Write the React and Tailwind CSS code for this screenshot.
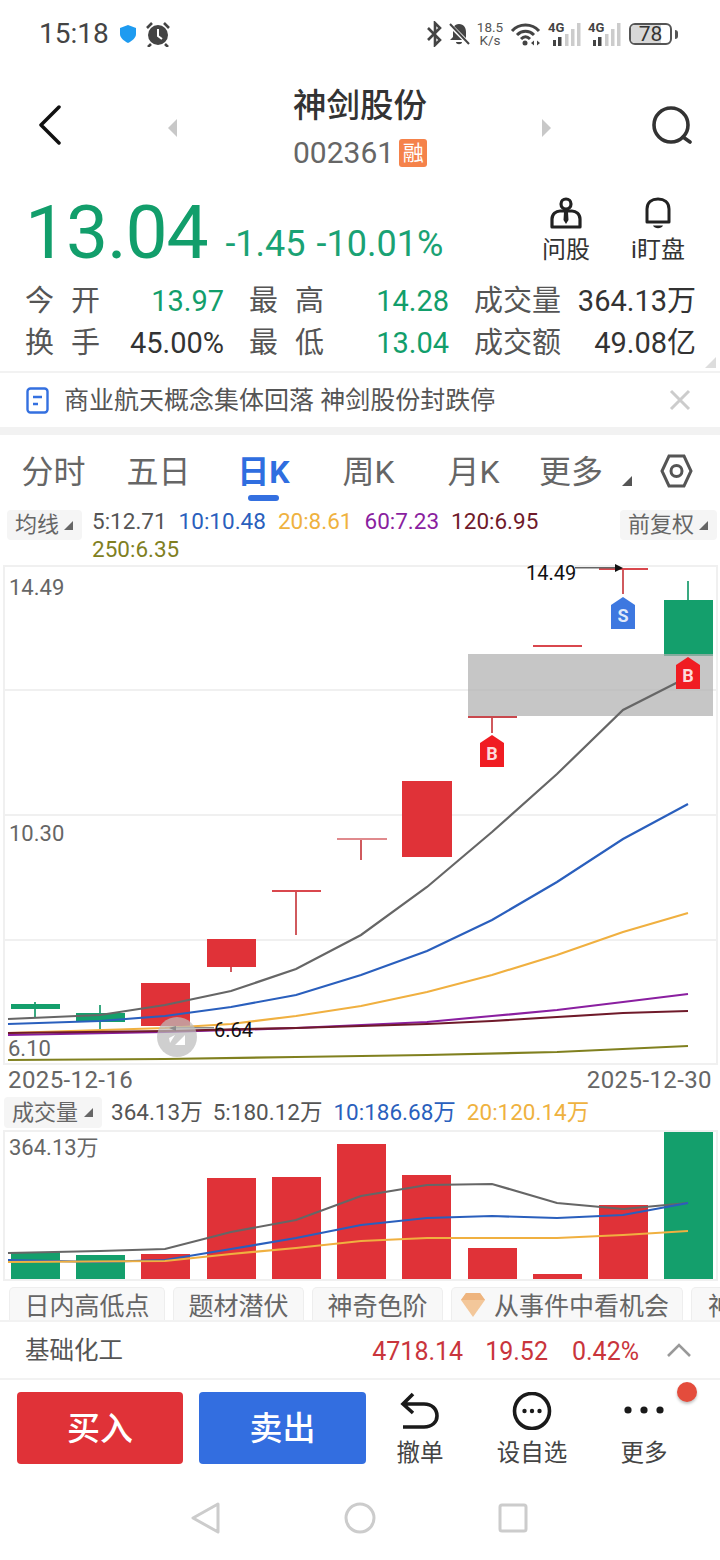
import React from "react";

const candles = [
  { x: 11, w: 49, y: 1004, h: 5, fill: "#149f6c", wick: [35, 1002, 1017] },
  { x: 76, w: 49, y: 1013, h: 9, fill: "#149f6c", wick: [100, 1005, 1029] },
  { x: 141, w: 49, y: 983, h: 43, fill: "#e03238" },
  { x: 207, w: 49, y: 939, h: 28, fill: "#e03238", wick: [231, 967, 972] },
  { x: 272, w: 49, y: 890, h: 2, fill: "#d9474d", wick: [296, 891, 935] },
  { x: 337, w: 50, y: 838, h: 2, fill: "#e08a8d", wick: [361, 839, 860] },
  { x: 402, w: 50, y: 781, h: 76, fill: "#e03238" },
  { x: 468, w: 49, y: 716, h: 2, fill: "#c9484d", wick: [492, 717, 733] },
  { x: 533, w: 49, y: 645, h: 2, fill: "#d9474d" },
  { x: 599, w: 49, y: 568, h: 2, fill: "#d9474d", wick: [623, 569, 594] },
  { x: 664, w: 49, y: 600, h: 56, fill: "#149f6c", wick: [688, 581, 600] },
];

const maLines = [
  ["#80801f", "8,1060 165,1059 296,1057 427,1055 557,1052 688,1046"],
  ["#f0b040", "8,1033 165,1028 231,1024 296,1016 361,1006 427,992 492,975 557,955 623,932 688,913"],
  ["#8a1fa0", "8,1035 165,1032 296,1028 427,1022 492,1016 557,1010 623,1002 688,994"],
  ["#6f1a2a", "8,1033 165,1031 296,1028 427,1024 492,1021 557,1017 623,1013 688,1011"],
  ["#2a5fbd", "8,1024 100,1021 165,1016 231,1007 296,995 361,975 427,951 492,920 557,882 623,839 688,804"],
  ["#666666", "8,1019 100,1015 165,1005 231,991 296,969 361,935 427,887 492,832 557,774 623,710 688,677"],
];

const volBars = [
  [11, 1252, "#149f6c"], [76, 1255, "#149f6c"], [141, 1254, "#e03238"], [207, 1178, "#e03238"],
  [272, 1177, "#e03238"], [337, 1144, "#e03238"], [402, 1175, "#e03238"], [468, 1248, "#e03238"],
  [533, 1274, "#e03238"], [599, 1205, "#e03238"], [664, 1132, "#149f6c"],
];

const volLines = [
  ["#666666", "8,1253 100,1251 165,1249 231,1232 296,1220 361,1196 427,1185 492,1184 557,1203 623,1209 688,1203"],
  ["#2a5fbd", "8,1260 100,1262 165,1260 231,1249 296,1238 361,1225 427,1218 492,1216 557,1218 623,1215 688,1203"],
  ["#f0b040", "8,1262 165,1261 231,1254 296,1248 361,1241 427,1238 557,1238 623,1235 688,1231"],
];

function Tag({ x, y, fill, letter }) {
  return (
    <g>
      <path d={`M${x} ${y + 8} L${x + 12} ${y} L${x + 24} ${y + 8} V${y + 32} H${x} Z`} fill={fill} />
      <text x={x + 12} y={y + 25} textAnchor="middle" fontSize="18" fontWeight="700" fill="#fff" fillOpacity="0.85">{letter}</text>
    </g>
  );
}

function KChart() {
  return (
    <svg width="720" height="500" viewBox="0 565 720 500" className="block overflow-visible">
      <rect x="4" y="566" width="713" height="498" fill="#fff" stroke="#f0f0f0" strokeWidth="2" />
      {[690, 815, 940].map(y => <rect key={y} x="5" y={y - 1} width="712" height="2" fill="#f0f0f0" />)}
      {candles.map((c, i) => (
        <g key={i}>
          {c.wick && <rect x={c.wick[0] - 1} y={c.wick[1]} width="2" height={c.wick[2] - c.wick[1]} fill={c.fill === "#149f6c" ? "#3aa981" : "#d05a5e"} />}
          <rect x={c.x} y={c.y} width={c.w} height={c.h} fill={c.fill} />
        </g>
      ))}
      <rect x="468" y="654" width="245" height="62" fill="#b0b0b0" fillOpacity="0.72" />
      {maLines.map(([color, pts]) => <polyline key={color} points={pts} fill="none" stroke={color} strokeWidth="2.2" />)}
      <Tag x={480} y={735} fill="#f01c22" letter="B" />
      <Tag x={611} y={597} fill="#3d78e0" letter="S" />
      <Tag x={676} y={657} fill="#f01c22" letter="B" />

      <text x="9" y="595" fontSize="22" fill="#666">14.49</text>
      <text x="9" y="841" fontSize="22" fill="#666">10.30</text>
      <text x="8" y="1056" fontSize="22" fill="#666">6.10</text>

      <text x="526" y="580" fontSize="20" fill="#111">14.49</text>
      <rect x="575" y="567" width="42" height="1.5" fill="#666" />
      <path d="M615 564 L623 568 L615 572 Z" fill="#111" />

      <rect x="172" y="1027" width="42" height="1.5" fill="#888" />
      <path d="M169 1028 L176 1026 L176 1031 Z" fill="#111" />
      <text x="214" y="1037" fontSize="20" fill="#111">6.64</text>
      <circle cx="177" cy="1037" r="20" fill="#bdbdbd" fillOpacity="0.72" />
      <path d="M185 1035 V1045 H175 Z M169 1038 L175 1035 L170 1043 Z" fill="#fff" />
    </svg>
  );
}

function VolChart() {
  return (
    <svg width="720" height="151" viewBox="0 1130 720 151" className="block">
      <rect x="4" y="1131" width="713" height="149" fill="#fff" stroke="#f0f0f0" strokeWidth="2" />
      {volBars.map(([x, y, fill]) => <rect key={x} x={x} y={y} width="49" height={1279 - y} fill={fill} />)}
      {volLines.map(([color, pts]) => <polyline key={color} points={pts} fill="none" stroke={color} strokeWidth="2.2" />)}
      <text x="9" y="1155" fontSize="22" fill="#666">364.13万</text>
    </svg>
  );
}

function Caret() {
  return <span className="w-0 h-0 border-l-[9px] border-l-transparent border-b-[9px] border-b-[#666]" />;
}

function Stat({ label, value, spaced, wide, color = "text-[#333]" }) {
  return (
    <div className="flex items-center">
      <div className={`${wide ? "w-[88px]" : "w-[75px]"} flex justify-between text-[#555]`}>
        {spaced ? label.split("").map(ch => <span key={ch}>{ch}</span>) : <span>{label}</span>}
      </div>
      <div className={`flex-1 text-right ${color}`}>{value}</div>
    </div>
  );
}

function StatusBar() {
  return (
    <div className="h-[68px] flex items-center pl-[39px] pr-[42px] text-[#444]">
      <span className="text-[28px] leading-none">15:18</span>
      <svg width="16" height="18" viewBox="0 0 16 18" className="ml-[11px]">
        <path d="M8 0 L16 3 V9 C16 13 12 16 8 18 C4 16 0 13 0 9 V3 Z" fill="#1e9bf0" />
      </svg>
      <svg width="26" height="26" viewBox="0 0 26 26" className="ml-[9px]">
        <circle cx="13" cy="14" r="10" fill="#444" />
        <path d="M13 8 V15 L17 18" fill="none" stroke="#fff" strokeWidth="2" />
        <path d="M2 7 L7 2 M24 7 L19 2 M6 23 L3 26 M20 23 L23 26" fill="none" stroke="#444" strokeWidth="2.6" />
      </svg>
      <div className="flex-1" />
      <svg width="15" height="26" viewBox="0 0 15 26" fill="none" stroke="#444" strokeWidth="2.6">
        <path d="M1 7 L13 19 L8 24 V2 L13 7 L1 19" />
      </svg>
      <svg width="22" height="24" viewBox="0 0 22 24" className="ml-[6px]">
        <path d="M11 2 C6 2 5 6 5 10 V15 L2 18 H18 V10 C18 6 16 2 11 2 Z" fill="#444" />
        <path d="M8 20 H14 C14 23 8 23 8 20 Z" fill="#444" />
        <path d="M2 3 L20 21" stroke="#fff" strokeWidth="4" />
        <path d="M2 2 L21 22" stroke="#444" strokeWidth="2" />
      </svg>
      <div className="ml-[6px] w-[28px] flex flex-col items-center text-[13.5px] leading-[13.5px] text-[#555]">
        <span>18.5</span>
        <span>K/s</span>
      </div>
      <svg width="31" height="24" viewBox="0 0 31 24" className="ml-[6px]" fill="none" stroke="#444" strokeWidth="3">
        <path d="M2 9 C9 1 22 1 29 9 M7 13 C12 8 19 8 24 13 M11 17 C14 14 17 14 20 17" />
        <circle cx="15" cy="21" r="2.5" fill="#444" stroke="none" />
        <path d="M21 21 L24 18.5 V23.5 Z M30 21 L27 18.5 V23.5 Z" fill="#444" stroke="none" />
      </svg>
      {[0, 1].map(i => (
        <div key={i} className={`relative h-[26px] w-[34px] ${i === 0 ? "ml-[7px]" : "ml-[6px]"}`}>
          <span className="absolute left-0 top-0 text-[13px] leading-[14px] font-bold text-[#444]">4G</span>
          <svg width="34" height="26" viewBox="0 0 34 26" className="block">
            <rect x="5" y="19" width="3" height="6" fill="#444" />
            <rect x="10" y="16" width="3.5" height="9" fill="#444" />
            <rect x="17" y="13" width="3.5" height="12" fill="#ccc" />
            <rect x="23" y="8" width="3.5" height="17" fill="#ccc" />
            <rect x="29" y="2" width="3.5" height="23" fill="#ccc" />
          </svg>
        </div>
      ))}
      <div className="relative ml-[7px] w-[43px] h-[22px] rounded-[6px] border-2 border-[#555] overflow-hidden flex items-center justify-center">
        <div className="absolute left-0 top-0 bottom-0 w-[78%] bg-[#d8d8d8]" />
        <span className="relative text-[21px] leading-none text-[#333]">78</span>
      </div>
      <div className="ml-[3px] w-[3px] h-[9px] rounded-r-sm bg-[#555]" />
    </div>
  );
}

function Header() {
  return (
    <div className="h-[115px] flex">
      <div className="w-[293px] shrink-0 flex items-start pt-[37px] pl-[38px]">
        <svg width="23" height="40" viewBox="0 0 23 40" fill="none" stroke="#111" strokeWidth="3.5" strokeLinecap="round" strokeLinejoin="round">
          <path d="M21 2 L3 20 L21 38" />
        </svg>
        <span className="ml-[107px] mt-[14px] w-0 h-0 border-y-[9px] border-y-transparent border-r-[9px] border-r-[#c8c8c8]" />
      </div>
      <div className="w-[134px] shrink-0 flex flex-col items-start pt-[18px]">
        <div className="text-[33.5px] leading-[40px] font-medium text-[#333] whitespace-nowrap">神剑股份</div>
        <div className="flex items-center mt-[9px] h-[36px]">
          <span className="text-[30px] leading-none text-[#666]">002361</span>
          <span className="ml-[5px] w-[28px] h-[28px] rounded-[3px] bg-[#f5824a] text-white text-[21px] leading-[28px] text-center">融</span>
        </div>
      </div>
      <div className="flex-1 flex items-start justify-end pt-[38px] pr-[27px]">
        <span className="mr-[100px] mt-[13px] w-0 h-0 border-y-[9px] border-y-transparent border-l-[9px] border-l-[#c8c8c8]" />
        <svg width="42" height="38" viewBox="0 0 42 38" fill="none" stroke="#333" strokeWidth="3.6" strokeLinecap="round">
          <circle cx="20" cy="19" r="17" />
          <path d="M32 31 L39 36" />
        </svg>
      </div>
    </div>
  );
}

function Quote() {
  return (
    <div className="h-[97px] flex items-start pl-[25px]">
      <span className="text-[75px] leading-[80px] mt-[9px] text-[#129e6b] tracking-[-1.2px]">13.04</span>
      <div className="ml-[18px] mt-[40px] flex text-[36px] leading-[42px] text-[#1aa274] whitespace-nowrap">
        <span>-1.45</span>
        <span className="ml-[11px]">-10.01%</span>
      </div>
      <div className="flex-1" />
      <div className="w-[92px] flex flex-col items-center pt-[14px]">
        <svg width="32" height="32" viewBox="0 0 32 32" fill="none" stroke="#222" strokeWidth="3.2" strokeLinejoin="round">
          <circle cx="16" cy="7" r="5" />
          <path d="M2 30 V22 C2 17 6 14 10 14 H22 C26 14 30 17 30 22 V30 Z" />
          <path d="M14 15 H18 L18.5 23 L16 27 L13.5 23 Z" fill="#222" stroke="none" />
        </svg>
        <span className="text-[24px] leading-[30px] mt-[6px] text-[#333]">问股</span>
      </div>
      <div className="w-[92px] mr-[16px] flex flex-col items-center pt-[14px]">
        <svg width="26" height="32" viewBox="0 0 26 32" fill="none" stroke="#222" strokeWidth="3" strokeLinejoin="round">
          <path d="M2 25 V12 C2 5 7 2 13 2 C19 2 24 5 24 12 V25 Z" />
          <path d="M8 28.5 H18 C16.5 32 9.5 32 8 28.5 Z" fill="#222" stroke="none" />
        </svg>
        <span className="text-[24px] leading-[30px] mt-[6px] text-[#333]">i盯盘</span>
      </div>
    </div>
  );
}

function Stats() {
  const green = "text-[#129e6b]";
  return (
    <div className="relative h-[93px] pl-[25px] pr-[24px] text-[29px] leading-[42px] border-b-2 border-[#f2f2f2]">
      <div className="grid grid-cols-[199px_200px_1fr] gap-x-[25px]">
        <Stat label="今开" spaced value="13.97" color={green} />
        <Stat label="最高" spaced value="14.28" color={green} />
        <Stat label="成交量" wide value="364.13万" />
        <Stat label="换手" spaced value="45.00%" />
        <Stat label="最低" spaced value="13.04" color={green} />
        <Stat label="成交额" wide value="49.08亿" />
      </div>
      <span className="absolute right-[4px] bottom-[3px] w-0 h-0 border-l-[11px] border-l-transparent border-b-[11px] border-b-[#ddd]" />
    </div>
  );
}

function News() {
  return (
    <div className="h-[54px] flex items-center pl-[26px] pr-[29px]">
      <svg width="23" height="27" viewBox="0 0 23 27" fill="none" stroke="#3470e0" strokeWidth="2.4">
        <rect x="1.5" y="1.5" width="20" height="24" rx="3" />
        <path d="M7 10 H16 M7 17 H12" />
      </svg>
      <span className="ml-[15px] text-[25px] leading-none text-[#555] whitespace-pre">商业航天概念集体回落 神剑股份封跌停</span>
      <div className="flex-1" />
      <svg width="22" height="22" viewBox="0 0 22 22" stroke="#ccc" strokeWidth="3">
        <path d="M2 2 L20 20 M20 2 L2 20" />
      </svg>
    </div>
  );
}

function Tabs() {
  return (
    <div className="h-[72px] flex items-start pl-[1px] pt-[17px] text-[32px] leading-[40px] text-[#666]">
      <div className="w-[105px] text-center">分时</div>
      <div className="w-[105px] text-center">五日</div>
      <div className="w-[105px] flex flex-col items-center text-[#2f6ee0] font-bold">
        <span>日K</span>
        <span className="w-[31px] h-[6px] mt-[3px] rounded-full bg-[#3470e0]" />
      </div>
      <div className="w-[105px] text-center">周K</div>
      <div className="w-[105px] text-center">月K</div>
      <div className="w-[97px] pl-[13px] relative">
        更多
        <span className="absolute left-[96px] top-[24px] w-0 h-0 border-l-[10px] border-l-transparent border-b-[10px] border-b-[#555]" />
      </div>
      <svg width="33" height="36" viewBox="0 0 33 36" className="ml-[37px] mt-[1px]" fill="none" stroke="#555" strokeWidth="3">
        <path d="M9 3 H24 L31 18 L24 33 H9 L2 18 Z" />
        <circle cx="16.5" cy="18" r="5.5" />
      </svg>
    </div>
  );
}

function MaLegend() {
  return (
    <div className="h-[58px] flex items-start pl-[7px] pr-[3px] pt-[3px]">
      <div className="w-[75px] h-[30px] rounded-[4px] bg-[#f5f5f5] flex items-center pl-[8px] gap-[5px] text-[22px] text-[#666] leading-none">
        均线 <Caret />
      </div>
      <div className="ml-[10px] w-[500px] text-[22.5px] leading-[28px] -mt-[3px]">
        <span className="text-[#555] mr-[12px]">5:12.71</span>
        <span className="text-[#2a5fbd] mr-[12px]">10:10.48</span>
        <span className="text-[#efb23f] mr-[12px]">20:8.61</span>
        <span className="text-[#8a1fa0] mr-[12px]">60:7.23</span>
        <span className="text-[#6f1a2a]">120:6.95</span>
        <br />
        <span className="text-[#80801f]">250:6.35</span>
      </div>
      <div className="flex-1" />
      <div className="w-[97px] h-[30px] rounded-[4px] bg-[#f5f5f5] flex items-center pl-[8px] gap-[5px] text-[22px] text-[#666] leading-none">
        前复权 <Caret />
      </div>
    </div>
  );
}

function VolLegend() {
  return (
    <div className="h-[35px] flex items-center pl-[4px] text-[22.5px] leading-none whitespace-nowrap">
      <div className="w-[98px] h-[31px] rounded-[4px] bg-[#f5f5f5] flex items-center pl-[8px] gap-[6px] text-[22px] text-[#666]">
        成交量 <Caret />
      </div>
      <span className="ml-[9px] text-[#555]">364.13万</span>
      <span className="ml-[10px] text-[#555]">5:180.12万</span>
      <span className="ml-[11px] text-[#2a5fbd]">10:186.68万</span>
      <span className="ml-[11px] text-[#efb23f]">20:120.14万</span>
    </div>
  );
}

function Tags() {
  const boxes = [
    ["日内高低点", "w-[156px]"],
    ["题材潜伏", "w-[131px]"],
    ["神奇色阶", "w-[131px]"],
  ];
  return (
    <div className="h-[39px] pt-[6px] pl-[9px] flex gap-[8px] overflow-hidden text-[25px] leading-[26px] text-[#666]">
      {boxes.map(([t, w]) => (
        <div key={t} className={`${w} shrink-0 h-[33px] pt-[6px] text-center bg-[#f8f8f8] border border-b-0 border-[#eeeeee] rounded-t-[5px]`}>{t}</div>
      ))}
      <div className="w-[232px] shrink-0 h-[33px] pt-[6px] pl-[9px] flex bg-[#f8f8f8] border border-b-0 border-[#eeeeee] rounded-t-[5px]">
        <svg width="24" height="26" viewBox="0 0 24 26" className="-mt-[2px]">
          <path d="M5 1 H19 L24 8 L12 25 L0 8 Z" fill="#f3c79a" />
          <path d="M5 1 H19 L24 8 H0 Z" fill="#eeb47e" />
        </svg>
        <span className="ml-[9px]">从事件中看机会</span>
      </div>
      <div className="w-[60px] shrink-0 h-[33px] pt-[6px] pl-[16px] bg-[#f8f8f8] border border-b-0 border-[#eeeeee] rounded-t-[5px] whitespace-nowrap">神奇</div>
    </div>
  );
}

function Sector() {
  return (
    <div className="h-[60px] flex items-center pl-[25px] pr-[29px] pt-[3px] border-y-2 border-[#f2f2f2] text-[25px] leading-none">
      <span className="text-[#555] text-[24.5px]">基础化工</span>
      <div className="flex-1" />
      <span className="text-[#c9353c]">4718.14</span>
      <span className="ml-[22px] text-[#c9353c]">19.52</span>
      <span className="ml-[24px] text-[#c9353c]">0.42%</span>
      <svg width="24" height="14" viewBox="0 0 24 14" className="ml-[28px] -mt-[3px]" fill="none" stroke="#999" strokeWidth="2.6">
        <path d="M1 13 L12 2 L23 13" />
      </svg>
    </div>
  );
}

function ActionBar() {
  return (
    <div className="relative h-[90px] flex items-start pt-[12px] pl-[17px]">
      <div className="w-[166px] h-[72px] rounded-[4px] bg-[#e03238] flex items-center justify-center text-white text-[33px] leading-none font-medium">买入</div>
      <div className="ml-[16px] w-[167px] h-[72px] rounded-[4px] bg-[#336ee0] flex items-center justify-center text-white text-[33px] leading-none font-medium">卖出</div>
      <div className="ml-[-2px] w-[112px] flex flex-col items-center text-[23.5px] leading-[30px] text-[#444]">
        <svg width="40" height="38" viewBox="0 0 40 38" fill="none" stroke="#1a1a1a" strokeWidth="3.6" className="h-[38px]">
          <path d="M3 35 H24 C32 35 37 30 37 24 C37 17 32 12 24 12 H4 M13 2 L3 12 L13 21" />
        </svg>
        <span className="mt-[8px]">撤单</span>
      </div>
      <div className="w-[112px] flex flex-col items-center text-[23.5px] leading-[30px] text-[#444]">
        <svg width="40" height="38" viewBox="0 0 40 38" className="h-[38px]">
          <circle cx="20" cy="19" r="17.5" fill="none" stroke="#1a1a1a" strokeWidth="3.6" />
          <circle cx="12.5" cy="19" r="2.2" fill="#1a1a1a" />
          <circle cx="20" cy="19" r="2.2" fill="#1a1a1a" />
          <circle cx="27.5" cy="19" r="2.2" fill="#1a1a1a" />
        </svg>
        <span className="mt-[8px]">设自选</span>
      </div>
      <div className="w-[112px] flex flex-col items-center text-[23.5px] leading-[30px] text-[#444]">
        <svg width="40" height="38" viewBox="0 0 40 38" className="h-[38px]">
          <circle cx="4" cy="18" r="3.6" fill="#1a1a1a" />
          <circle cx="20" cy="18" r="3.6" fill="#1a1a1a" />
          <circle cx="36" cy="18" r="3.6" fill="#1a1a1a" />
        </svg>
        <span className="mt-[8px]">更多</span>
      </div>
      <span className="absolute left-[677px] top-[2px] w-[20px] h-[20px] rounded-full bg-[#e44c3c] shadow-[0_2px_3px_rgba(0,0,0,0.25)]" />
    </div>
  );
}

function NavBar() {
  return (
    <div className="h-[90px] flex items-start pt-[32px] pl-[191px]">
      <svg width="30" height="32" viewBox="0 0 30 32" fill="none" stroke="#ccc" strokeWidth="3" strokeLinejoin="round">
        <path d="M27 2 L2 16 L27 30 Z" />
      </svg>
      <svg width="32" height="32" viewBox="0 0 32 32" className="ml-[123px]" fill="none" stroke="#ccc" strokeWidth="3">
        <circle cx="16" cy="16" r="14" />
      </svg>
      <svg width="30" height="30" viewBox="0 0 30 30" className="ml-[122px] mt-[1px]" fill="none" stroke="#ccc" strokeWidth="3">
        <rect x="2" y="2" width="26" height="26" rx="2" />
      </svg>
    </div>
  );
}

export default function App() {
  return (
    <div className="w-[720px] h-[1560px] overflow-hidden bg-white font-['Roboto','Noto_Sans_CJK_SC',sans-serif]">
      <StatusBar />
      <Header />
      <Quote />
      <Stats />
      <News />
      <div className="h-[8px] bg-[#f2f2f2]" />
      <Tabs />
      <MaLegend />
      <KChart />
      <div className="h-[30px] flex items-center justify-between pl-[8px] pr-[8px] text-[24px] tracking-[0.4px] leading-none text-[#666]">
        <span>2025-12-16</span>
        <span>2025-12-30</span>
      </div>
      <VolLegend />
      <VolChart />
      <Tags />
      <Sector />
      <ActionBar />
      <NavBar />
    </div>
  );
}
